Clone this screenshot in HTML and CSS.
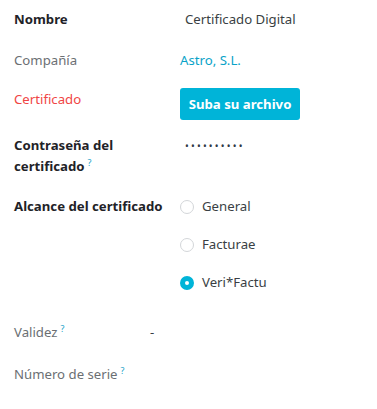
FILE: index.html
```html
<!DOCTYPE html>
<html lang="es">
<head>
    <meta charset="UTF-8">
    <title>Certificado</title>
    <link rel="stylesheet" href="styles.css">
</head>
<body>
    <div class="cert-form">
        <div class="row row-first">
            <div class="label strong">Nombre</div>
            <div class="value field">Certificado Digital</div>
        </div>
        <div class="row row-company">
            <div class="label muted">Compañía</div>
            <div class="value"><a href="#" class="link">Astro, S.L.</a></div>
        </div>
        <div class="row row-file">
            <div class="label required">Certificado</div>
            <div class="value"><button class="btn-upload">Suba su archivo</button></div>
        </div>
        <div class="row row-password">
            <div class="label strong">Contraseña del certificado<sup class="help">?</sup></div>
            <div class="value field password">••••••••••</div>
        </div>
        <div class="row row-scope">
            <div class="label strong">Alcance del certificado</div>
            <div class="value radios">
                <label class="radio"><span class="radio-dot"></span>General</label>
                <label class="radio"><span class="radio-dot"></span>Facturae</label>
                <label class="radio"><span class="radio-dot checked"></span>Veri*Factu</label>
            </div>
        </div>
        <div class="row row-validity">
            <div class="label muted">Validez<sup class="help">?</sup></div>
            <div class="value">-</div>
        </div>
        <div class="row row-serial">
            <div class="label muted">Número de serie<sup class="help">?</sup></div>
            <div class="value"></div>
        </div>
    </div>
</body>
</html>
```

FILE: styles.css
```css
body {
    margin: 0;
    background: #fff;
    font-family: "Noto Sans", "Open Sans", sans-serif;
    font-size: 13.2px;
    line-height: 21px;
    color: #374151;
}

.cert-form {
    display: flex;
    flex-direction: column;
    gap: 19px;
    padding: 9px 14px 0 14px;
}

.row {
    display: grid;
    grid-template-columns: 166px 1fr;
    align-items: start;
}

.row-company { margin-top: 1px; }
.row-file { margin-top: -2px; }
.row-password { margin-top: -4px; }
.row-validity { margin-top: 10px; grid-template-columns: 136px 1fr; }
.row-serial { margin-top: 2px; }

.label.strong {
    font-weight: 700;
    color: #1f2328;
    padding-right: 8px;
}

.label.muted {
    color: #6b6f73;
}

.label.required {
    color: #f04545;
    padding-top: 1px;
}

.help {
    color: #17a2c8;
    font-size: 9px;
    font-weight: 400;
    margin-left: 3px;
    line-height: 0;
    vertical-align: 5px;
}

.value {
    color: #3a3f44;
}

.field {
    padding-left: 5px;
}

.link {
    color: #0aa3c8;
    text-decoration: none;
}

.btn-upload {
    background-color: #00b4d8;
    color: #fff;
    border: none;
    border-radius: 3px;
    font-family: inherit;
    font-size: 13.2px;
    font-weight: 700;
    height: 32px;
    width: 120px;
    padding: 0;
    cursor: pointer;
}

.password {
    font-size: 10px;
    letter-spacing: 2.2px;
    color: #2f3a45;
    padding-top: 1px;
}

.radios {
    display: flex;
    flex-direction: column;
    gap: 17px;
}

.radio {
    display: flex;
    align-items: center;
    gap: 8px;
}

.radio-dot {
    width: 12px;
    height: 12px;
    border: 1px solid #d3d6d9;
    border-radius: 50%;
    box-sizing: content-box;
}

.radio-dot.checked {
    width: 4px;
    height: 4px;
    border: 5px solid #00b4d8;
    background: #fff;
}
```
